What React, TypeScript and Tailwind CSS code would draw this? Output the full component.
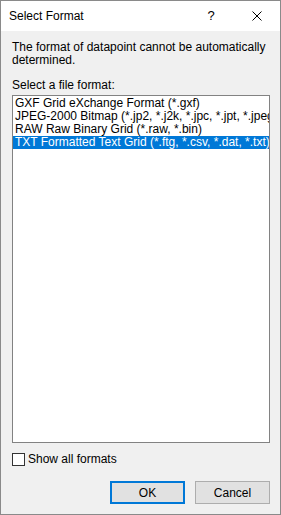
import React from "react";

export default function App() {
  const items = [
    "GXF Grid eXchange Format (*.gxf)",
    "JPEG-2000 Bitmap (*.jp2, *.j2k, *.jpc, *.jpt, *.jpeg2000)",
    "RAW Raw Binary Grid (*.raw, *.bin)",
    "TXT Formatted Text Grid (*.ftg, *.csv, *.dat, *.txt)",
  ];
  return (
    <div
      className="w-[281px] h-[515px] border border-[#8a8a8a] flex flex-col text-[12px] text-black overflow-hidden"
      style={{ fontFamily: '"Liberation Sans", Arial, sans-serif' }}
    >
      <div className="h-[30px] bg-white flex items-center shrink-0">
        <div className="pl-[8px] flex-1 text-[12px]">Select Format</div>
        <div className="w-[46px] h-full flex items-center justify-center text-[13px]">?</div>
        <div className="w-[46px] h-full flex items-center justify-center">
          <svg width="10" height="10" viewBox="0 0 10 10">
            <path d="M0.5 0.5 L9.5 9.5 M9.5 0.5 L0.5 9.5" stroke="#000" strokeWidth="1" />
          </svg>
        </div>
      </div>
      <div className="flex-1 bg-[#f0f0f0] flex flex-col pl-[11px] pr-[10px] pt-[10px] pb-[10px]">
        <div className="leading-[13px]">
          The format of datapoint cannot be automatically
          <br />
          determined.
        </div>
        <div className="leading-[13px] mt-[12px]">Select a file format:</div>
        <div className="mt-[3px] flex-1 bg-white border border-[#828282] pt-[1px] overflow-hidden">
          {items.map((t, i) => (
            <div
              key={i}
              className={
                "h-[13px] leading-[13px] whitespace-nowrap pl-[2px] overflow-hidden " +
                (i === 3 ? "bg-[#0078d7] text-white" : "")
              }
            >
              {t}
            </div>
          ))}
        </div>
        <div className="mt-[10px] flex items-center h-[13px]">
          <div className="w-[13px] h-[13px] border border-[#333333] bg-white" />
          <span className="ml-[3px] leading-[13px]">Show all formats</span>
        </div>
        <div className="mt-[15px] flex justify-end gap-[10px]">
          <button className="w-[75px] h-[23px] bg-[#e1e1e1] border-2 border-[#0078d7] text-[12px] flex items-center justify-center">
            OK
          </button>
          <button className="w-[75px] h-[23px] bg-[#e1e1e1] border border-[#adadad] text-[12px] flex items-center justify-center">
            Cancel
          </button>
        </div>
      </div>
    </div>
  );
}
